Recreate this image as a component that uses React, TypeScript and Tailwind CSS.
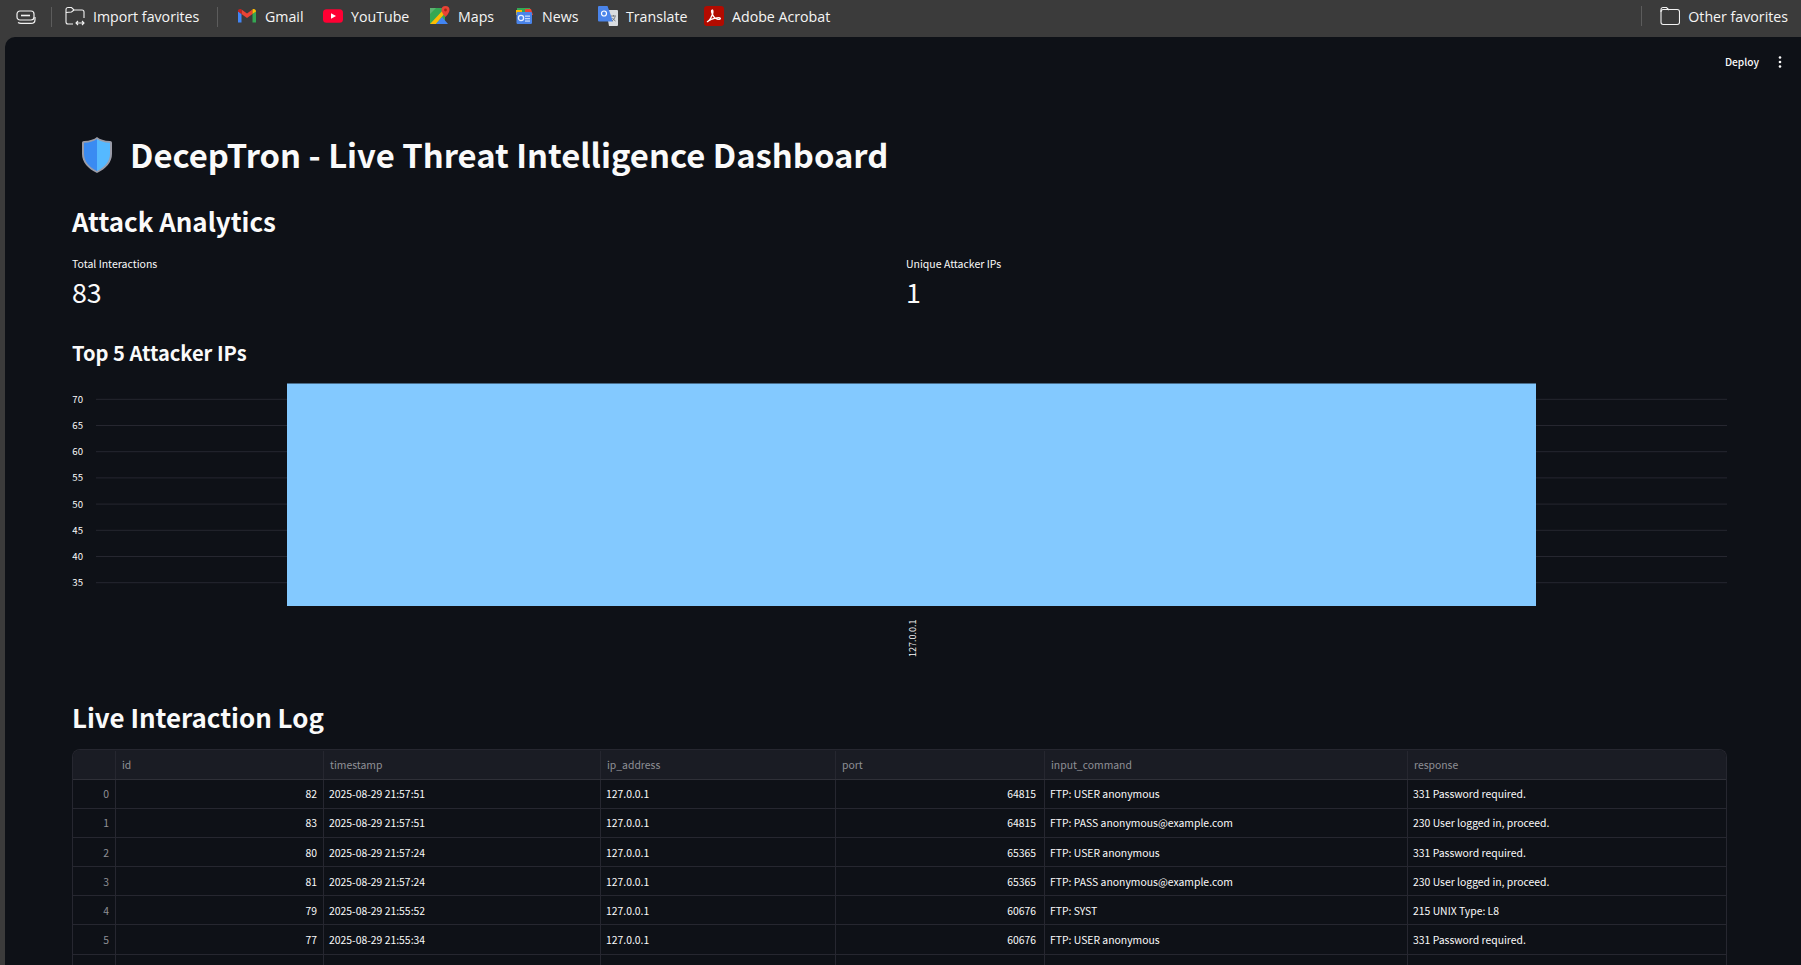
const uiFont = "font-['Open_Sans','Noto_Sans',sans-serif]"
const appFont = "font-['Noto_Sans_CJK_SC','Noto_Sans',sans-serif]"

function FolderIcon({ transfer }: { transfer?: boolean }) {
  return (
    <svg width="20" height="20" viewBox="0 0 20 20" fill="none" stroke="#f2f2f2" strokeWidth="1.1" className="shrink-0">
      {transfer ? (
        <>
          <path d="M8 18H3a2 2 0 0 1-2-2V3.5A2 2 0 0 1 3 1.5h3.5l2.5 2.5h8a2 2 0 0 1 2 2V12" />
          <path d="M1 6.5 6.5 6l2.5-2" />
          <path d="M11 17h8M13 15l-2 2 2 2M17 15l2 2-2 2" />
        </>
      ) : (
        <>
          <rect x="1" y="3.5" width="18.5" height="15" rx="2.2" />
          <path d="M1 6V3.5A2 2 0 0 1 3 1.5h3.5l2.5 2.5" />
        </>
      )}
    </svg>
  )
}

function Gmail() {
  return (
    <svg width="20" height="20" viewBox="0 0 20 20" className="shrink-0">
      <path d="M1 5v11.5h3.5V8z" fill="#4285f4" />
      <path d="M19 5v11.5h-3.5V8z" fill="#34a853" />
      <path d="M4.500 8 10 12l5.500-4V3.500L10 7.500 4.500 3.500z" fill="#ea4335" />
      <path d="M1 5c0-1.600 2-2.400 3.500-1.500V8L1 5.500z" fill="#c5221f" />
      <path d="M19 5c0-1.600-2-2.400-3.500-1.500V8L19 5.500z" fill="#fbbc04" />
    </svg>
  )
}

function YouTube() {
  return (
    <svg width="20" height="20" viewBox="0 0 20 20" className="shrink-0">
      <rect x="0" y="3.200" width="20" height="13.600" rx="3.500" fill="#ff0033" />
      <path d="M8 7.200 13 10l-5 2.800z" fill="#fff" />
    </svg>
  )
}

function Maps() {
  return (
    <svg width="20" height="20" viewBox="0 0 20 20" className="shrink-0">
      <path d="M0 2h15v16H0z" fill="#34a853" />
      <path d="M0 18 15 2v5L6 18z" fill="#fbbc04" />
      <path d="M6 18l6-7 6 7z" fill="#4285f4" />
      <path d="M0 2h6l-6 6z" fill="#5cb270" />
      <path d="M15.500 0a4 4 0 0 0-4 4c0 3 4 7 4 7s4-4 4-7a4 4 0 0 0-4-4z" fill="#ea4335" />
      <circle cx="15.500" cy="4" r="1.400" fill="#a52714" />
    </svg>
  )
}

function News() {
  return (
    <svg width="20" height="20" viewBox="0 0 20 20" className="shrink-0">
      <path d="M3 2h13l1 5H3z" fill="#34a853" />
      <path d="M2 4h6v5H2z" fill="#fbbc04" />
      <path d="M11 3h6l2 6h-8z" fill="#ea4335" />
      <rect x="2.500" y="6" width="15.500" height="12" rx="1.200" fill="#4a84ea" />
      <rect x="11" y="9.500" width="5" height="1.300" fill="#c6dafc" />
      <rect x="11" y="12" width="5" height="1.300" fill="#c6dafc" />
      <rect x="11" y="14.400" width="5" height="1.300" fill="#c6dafc" />
      <circle cx="7" cy="12" r="2.600" fill="none" stroke="#e8f0fe" strokeWidth="1.300" />
    </svg>
  )
}

function Translate() {
  return (
    <svg width="20" height="20" viewBox="0 0 20 20" className="shrink-0">
      <path d="M8 4h11a1 1 0 0 1 1 1v14a1 1 0 0 1-1 1H11z" fill="#d9dce0" />
      <path d="M1 0h8.500L15 15.500H1a1 1 0 0 1-1-1V1a1 1 0 0 1 1-1z" fill="#4a84ea" />
      <circle cx="6" cy="7.500" r="2.500" fill="none" stroke="#fff" strokeWidth="1.200" />
      <path d="M13 10h5M15.500 9v1.500M14 15c1.800-1.200 2.800-2.800 3-4.500M14.500 12c.7 1.300 1.700 2.300 3 3" fill="none" stroke="#70757a" strokeWidth="0.900" />
    </svg>
  )
}

function Acrobat() {
  return (
    <svg width="20" height="20" viewBox="0 0 20 20" className="shrink-0">
      <rect width="20" height="20" rx="3" fill="#b30b00" />
      <path d="M3.500 15.500c2-.8 4.500-5 5.300-8.500.3-1.500.1-3.200-.7-3-.9.200-.6 2.200.2 4 1.100 2.500 3.400 5 5.500 5.300 1.800.3 2.800-.5 2.500-1.100-.4-.7-2.500-.6-5-.1-2.900.6-5.600 1.700-7 2.900-.6.500-1 1-.8.500z" fill="none" stroke="#fff" strokeWidth="1.300" />
    </svg>
  )
}

function Shield() {
  return (
    <svg width="30" height="36" viewBox="0 0 30 36" className="shrink-0">
      <path d="M15 0c3 2.500 7 3.800 13 4 1.300 0 2 .7 2 2v11c0 8-6 15-15 19C6 32 0 25 0 17V6c0-1.300.7-2 2-2 6-.2 10-1.500 13-4z" fill="#9a9ca8" />
      <path d="M15 2C12 4.200 8 5.500 2.300 5.800 2 5.800 2 6 2 6.300V17c0 7 5 13 13 17z" fill="#3a8bf2" />
      <path d="M15 2c3 2.200 7 3.500 12.700 3.800.3 0 .3.200.3.500V17c0 7-5 13-13 17z" fill="#55b9ff" />
    </svg>
  )
}

const bookmarks = [
  { icon: Gmail, label: 'Gmail', width: 'w-[86px]' },
  { icon: YouTube, label: 'YouTube', width: 'w-[107px]' },
  { icon: Maps, label: 'Maps', width: 'w-[84px]' },
  { icon: News, label: 'News', width: 'w-[84px]' },
  { icon: Translate, label: 'Translate', width: 'w-[106px]' },
  { icon: Acrobat, label: 'Adobe Acrobat', width: 'w-[130px]' },
]

const rows = [
  ['0', '82', '2025-08-29 21:57:51', '127.0.0.1', '64815', 'FTP: USER anonymous', '331 Password required.'],
  ['1', '83', '2025-08-29 21:57:51', '127.0.0.1', '64815', 'FTP: PASS anonymous@example.com', '230 User logged in, proceed.'],
  ['2', '80', '2025-08-29 21:57:24', '127.0.0.1', '65365', 'FTP: USER anonymous', '331 Password required.'],
  ['3', '81', '2025-08-29 21:57:24', '127.0.0.1', '65365', 'FTP: PASS anonymous@example.com', '230 User logged in, proceed.'],
  ['4', '79', '2025-08-29 21:55:52', '127.0.0.1', '60676', 'FTP: SYST', '215 UNIX Type: L8'],
  ['5', '77', '2025-08-29 21:55:34', '127.0.0.1', '60676', 'FTP: USER anonymous', '331 Password required.'],
  ['', '', '', '', '', '', ''],
]

const columns = ['', 'id', 'timestamp', 'ip_address', 'port', 'input_command', 'response']
const gridCols = 'grid grid-cols-[42px_208px_277px_235px_209px_363px_1fr]'

function Chart() {
  const ticks = [70, 65, 60, 55, 50, 45, 40, 35]
  return (
    <svg width="1655" height="295" viewBox="0 0 1655 295" className="block">
      {ticks.map((t, i) => {
        const y = 24.3 + i * 26.2
        return (
          <g key={t}>
            <line x1="24" x2="1655" y1={y} y2={y} stroke="#262730" strokeWidth="1" />
            <text x="11" y={y + 3.5} textAnchor="end" fontSize="9.6" fill="#fafafa">{t}</text>
          </g>
        )
      })}
      <rect x="215" y="8.500" width="1249" height="222.500" fill="#83c9ff" />
      <text transform="translate(843.500 282) rotate(-90)" fontSize="9" fill="#fafafa">127.0.0.1</text>
    </svg>
  )
}

export default function App() {
  return (
    <div className="h-[965px] w-[1801px] overflow-hidden bg-[#3b3b3b]">
      {/* favorites bar */}
      <div className={`flex h-[37px] items-center pb-[4px] text-[14.2px] text-[#f5f5f5] ${uiFont}`}>
        <svg width="20" height="14" viewBox="0 0 20 14" fill="none" stroke="#f2f2f2" strokeWidth="1.200" className="ml-[16px] shrink-0">
          <rect x="1" y="1" width="17" height="9" rx="3" />
          <path d="M5 5.500h9" strokeWidth="1.600" />
          <path d="M2 12.500c1 .7 2 .9 3 .9h10c2 0 4-1.400 4-4V7" />
        </svg>
        <div className="ml-[15px] h-[20px] w-px bg-[#5c5c5c]" />
        <div className="ml-[13px] flex w-[152px] items-center gap-[8px]">
          <FolderIcon transfer />
          <span>Import favorites</span>
        </div>
        <div className="h-[20px] w-px bg-[#5c5c5c]" />
        <div className="ml-[19px] flex items-center">
          {bookmarks.map(({ icon: Icon, label, width }) => (
            <div key={label} className={`flex items-center gap-[8px] ${width}`}>
              <Icon />
              <span>{label}</span>
            </div>
          ))}
        </div>
        <div className="ml-auto flex items-center">
          <div className="h-[20px] w-px bg-[#5c5c5c]" />
          <div className="ml-[18px] mr-[13px] flex items-center gap-[8px]">
            <FolderIcon />
            <span>Other favorites</span>
          </div>
        </div>
      </div>

      {/* app panel */}
      <div className={`ml-[5px] h-[928px] overflow-hidden rounded-tl-[10px] bg-[#0e1117] pl-[67px] pr-[74px] text-[#fafafa] ${appFont}`}>
        <div className="-mr-[74px] flex h-[50px] items-center justify-end gap-[19px] pr-[19px]">
          <span className="text-[10.2px] font-medium">Deploy</span>
          <svg width="4" height="12" viewBox="0 0 4 12" fill="#fafafa">
            <circle cx="2" cy="1.500" r="1.300" />
            <circle cx="2" cy="6" r="1.300" />
            <circle cx="2" cy="10.500" r="1.300" />
          </svg>
        </div>

        <div className="ml-[10px] mt-[50px] flex h-[36px] items-center gap-[18px]">
          <Shield />
          <h1 className="-mt-[2px] text-[32.8px] font-bold leading-[36px]">DecepTron - Live Threat Intelligence Dashboard</h1>
        </div>

        <h2 className="mt-[30px] text-[25.9px] font-semibold leading-[36px]">Attack Analytics</h2>

        <div className="mt-[17px] grid grid-cols-[834px_1fr]">
          <div>
            <div className="text-[10.5px] leading-[16px]">Total Interactions</div>
            <div className="mt-[2px] text-[26.8px] leading-[36px]">83</div>
          </div>
          <div>
            <div className="text-[10.5px] leading-[16px]">Unique Attacker IPs</div>
            <div className="mt-[2px] text-[26.8px] leading-[36px]">1</div>
          </div>
        </div>

        <h3 className="mt-[28px] text-[20.1px] font-semibold leading-[30px]">Top 5 Attacker IPs</h3>

        <div className="mt-[7px]">
          <Chart />
        </div>

        <h2 className="mt-[29px] text-[25.9px] font-semibold leading-[36px]">Live Interaction Log</h2>

        <div className="mt-[14px] overflow-hidden rounded-t-[8px] border border-b-0 border-[#262730] text-[10.4px]">
          <div className={`${gridCols} h-[29.500px] border-b border-[#2f3038] bg-[#1a1c24] pt-px text-[#8f9096]`}>
            {columns.map((c, i) => (
              <div key={i} className={`flex items-center px-[6px] ${i > 0 ? 'border-l border-[#262730]' : ''}`}>{c}</div>
            ))}
          </div>
          {rows.map((row, r) => (
            <div key={r} className={`${gridCols} h-[29.200px] border-b border-[#262730]`}>
              {row.map((cell, i) => (
                <div
                  key={i}
                  className={`flex items-center pl-[5px] pt-px ${i > 0 ? 'border-l border-[#262730]' : 'justify-end text-[#8f9096]'} ${i === 4 ? 'justify-end pr-[8px]' : 'pr-[6px]'} ${i === 1 ? 'justify-end' : ''}`}
                >
                  {cell}
                </div>
              ))}
            </div>
          ))}
        </div>
      </div>
    </div>
  )
}
